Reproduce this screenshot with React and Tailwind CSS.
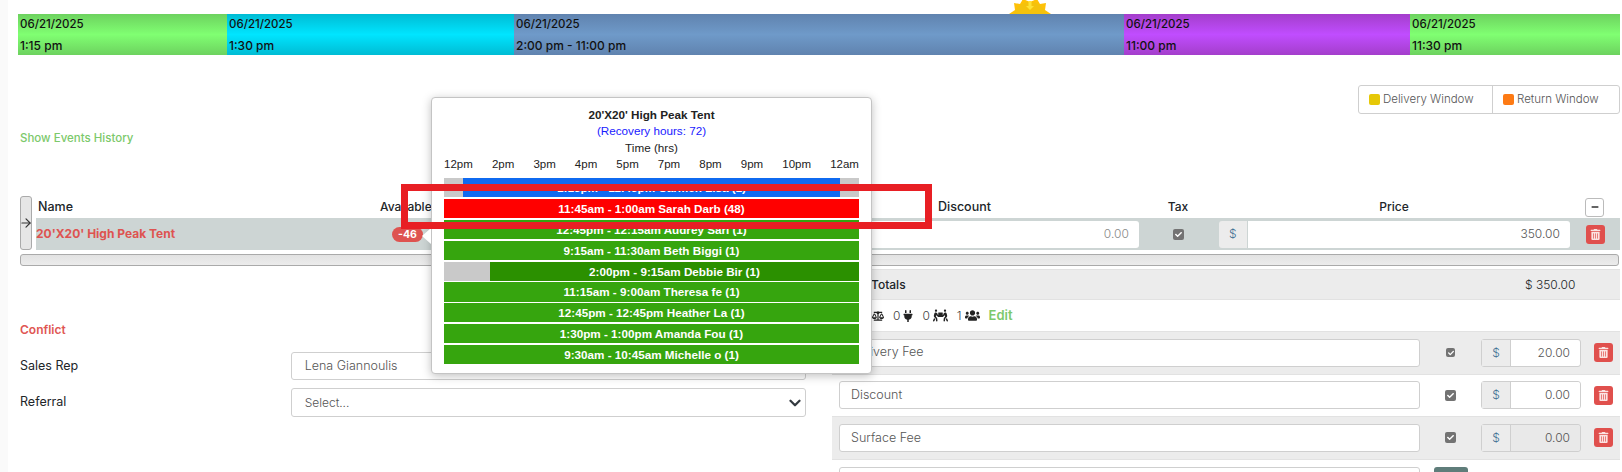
import React from 'react';
import { ArrowRight } from 'lucide-react';
import { FaBalanceScale, FaCheck, FaMinus, FaPeopleCarry, FaPlug, FaTrashAlt, FaUsers } from 'react-icons/fa';

const segments = [
  { time: '1:15 pm', width: 'w-[209px]', color: 'from-[#6dd25f] via-[#80ff72] to-[#6dd25f]' },
  { time: '1:30 pm', width: 'w-[287px]', color: 'from-[#00bcd4] via-[#00e5ff] to-[#00bcd4]' },
  { time: '2:00 pm - 11:00 pm', width: 'w-[610px]', color: 'from-[#6083af] via-[#6f9ac9] to-[#6083af]' },
  { time: '11:00 pm', width: 'w-[286px]', color: 'from-[#a43ecb] via-[#c04dff] to-[#a43ecb]' },
  { time: '11:30 pm', width: 'flex-1', color: 'from-[#6dd25f] via-[#80ff72] to-[#6dd25f]' },
];

const hours = ['12pm', '2pm', '3pm', '4pm', '5pm', '7pm', '8pm', '9pm', '10pm', '12am'];

const bookings = [
  { label: '1:15pm - 11:45pm Carmen Lisa (1)', color: 'bg-[#0f6af0]', before: 'w-[19px]', after: 'w-[19px]', height: 'h-[19px]' },
  { label: '11:45am - 1:00am Sarah Darb (48)', color: 'bg-[#ff0000]', height: 'h-[19px]' },
  { label: '12:45pm - 12:15am Audrey Sari (1)', color: 'bg-[#36a50e]', height: 'h-[19px]' },
  { label: '9:15am - 11:30am Beth Biggi (1)', color: 'bg-[#36a50e]', height: 'h-[19px]' },
  { label: '2:00pm - 9:15am Debbie Bir (1)', color: 'bg-[#2b9000]', before: 'w-[46px]', height: 'h-[19px]' },
  { label: '11:15am - 9:00am Theresa fe (1)', color: 'bg-[#36a50e]', height: 'h-[20px] -mt-px' },
  { label: '12:45pm - 12:45pm Heather La (1)', color: 'bg-[#36a50e]', height: 'h-[19px] -mt-px' },
  { label: '1:30pm - 1:00pm Amanda Fou (1)', color: 'bg-[#36a50e]', height: 'h-[19px]' },
  { label: '9:30am - 10:45am Michelle o (1)', color: 'bg-[#36a50e]', height: 'h-[19px]' },
];

const fees = [
  { name: 'Delivery Fee', value: '20.00', shade: 'bg-[#ececec]', small: true },
  { name: 'Discount', value: '0.00', shade: 'bg-white' },
  { name: 'Surface Fee', value: '0.00', shade: 'bg-[#ececec]', locked: true },
];

const Check = ({ small }) => (
  <span className={`flex items-center justify-center rounded-[2px] bg-[#737373] text-white ${small ? 'h-[9px] w-[9px]' : 'h-[11px] w-[11px]'}`}>
    <FaCheck className={small ? 'text-[6px]' : 'text-[7px]'} />
  </span>
);

const TrashButton = () => (
  <span className="flex h-[19px] w-[19px] items-center justify-center rounded-[3px] bg-[#e0504d] text-[#fbe3e2]">
    <FaTrashAlt className="text-[11px]" />
  </span>
);

const Sun = () => (
  <svg viewBox="0 0 44 14" className="absolute left-[1008px] top-0 h-[14px] w-[44px]">
    <path d="M1 14 L7 10 L6 3 L12 4 L15 -1 L22 2 L29 -1 L32 4 L38 3 L37 10 L43 14 Z" fill="#ffc107" />
    <circle cx="22" cy="19" r="17" fill="#f4c20d" />
    <path d="M20.5 1 H23.5 V6 H26 L22 10 L18 6 H20.5 Z" fill="#ffe234" />
  </svg>
);

const App = () => {
  return (
    <div className="relative flex h-[472px] w-[1622px] overflow-hidden bg-white font-['Inter',sans-serif] text-[#212529]">
      <div className="w-2 bg-[#fafafa]"></div>

      <div className="flex-1 pl-[10px] pr-[2px]">
        <div className="mt-[14px] flex h-[41px]">
          {segments.map((segment, index) => (
            <div key={index} className={`${segment.width} bg-gradient-to-b ${segment.color} pl-[2px] font-medium leading-[21px] text-[#111]`}>
              <div className="text-[11.5px]">06/21/2025</div>
              <div className="text-[12px]">{segment.time}</div>
            </div>
          ))}
        </div>

        <div className="mt-[30px] flex justify-end">
          <div className="flex h-[29px] items-center rounded-[3px] border border-[#cfcfcf] text-[11.5px] font-light text-[#555]">
            <div className="flex h-full w-[134px] items-center gap-[3px] border-r border-[#cfcfcf] pl-[10px]">
              <span className="h-[11px] w-[11px] rounded-[2px] bg-[#e6c807]"></span>
              Delivery Window
            </div>
            <div className="flex h-full w-[126px] items-center gap-[3px] pl-[10px]">
              <span className="h-[11px] w-[11px] rounded-[2px] bg-[#fd7a14]"></span>
              Return Window
            </div>
          </div>
        </div>

        <div className="mt-[15px] pl-[2px] text-[11.5px] font-medium leading-[18px] text-[#7cc96b]">Show Events History</div>

        <div className="mt-[49px] flex pl-[2px]">
          <div className="flex h-[54px] w-[12px] items-center justify-center rounded-[3px] border border-[#aaa] bg-[#e6e6e6]">
            <ArrowRight className="h-[14px] w-[14px] shrink-0 text-[#333]" strokeWidth={2} />
          </div>
          <div className="ml-[4px] flex-1">
            <div className="flex h-[22px] items-center text-[12px] font-medium">
              <div className="ml-[2px] w-[342px] text-[12.5px]">Name</div>
              <div className="w-[558px]">Available</div>
              <div className="w-[210px] text-[12.5px]">Discount</div>
              <div className="w-[60px] text-center">Tax</div>
              <div className="ml-[106px] w-[160px] text-center">Price</div>
              <div className="ml-[111px] flex h-[19px] w-[19px] items-center justify-center rounded-[3px] border border-[#bbb]">
                <FaMinus className="text-[8px] text-[#333]" />
              </div>
            </div>
            <div className="flex h-[32px] items-center bg-[#cdd5d4]">
              <div className="w-[356px] text-[12px] font-bold text-[#de5350]">20'X20' High Peak Tent</div>
              <span className="rounded-full bg-[#de5350] px-[6px] text-[10.5px] font-bold leading-[15px] text-white">-46</span>
              <div className="ml-[429px] flex h-[27px] w-[287px] items-center justify-end rounded-[3px] bg-white pr-[10px] text-[12px] font-light text-[#8a8a8a]">0.00</div>
              <div className="flex w-[80px] justify-center"><Check /></div>
              <div className="flex h-[27px] w-[28px] items-center justify-center rounded-l-[3px] bg-[#ececec] text-[12px] font-light text-[#3f6f93]">$</div>
              <div className="ml-[1px] flex h-[27px] w-[322px] items-center justify-end rounded-r-[3px] bg-white pr-[10px] text-[12px] font-light text-[#555]">350.00</div>
              <div className="ml-[16px]"><TrashButton /></div>
            </div>
          </div>
        </div>

        <div className="ml-[2px] mr-px mt-[4px] h-[12px] rounded-[3px] border border-[#aaa] bg-gradient-to-b from-[#e2e2e2] to-[#ececec]"></div>

        <div className="flex">
          <div className="w-[788px] pl-[2px]">
            <div className="mt-[54px] text-[12px] font-semibold leading-[20px] text-[#e05653]">Conflict</div>
            <div className="mt-[12px] flex h-[28px] items-center text-[12.5px]">
              <div className="w-[271px]">Sales Rep</div>
              <div className="flex h-full w-[516px] items-center rounded-[3px] border border-[#cfcfcf] pl-[13px] font-light text-[#555]">Lena Giannoulis</div>
            </div>
            <div className="mt-[8px] flex h-[29px] items-center text-[12.5px]">
              <div className="w-[271px]">Referral</div>
              <div className="flex h-full w-[516px] items-center justify-between rounded-[3px] border border-[#cfcfcf] pl-[13px] pr-[4px] text-[12px] font-light text-[#555]">
                Select...
                <svg viewBox="0 0 16 16" className="h-[12px] w-[12px]">
                  <path d="M2 5l6 6 6-6" fill="none" stroke="#343a40" strokeWidth="3" strokeLinecap="round" strokeLinejoin="round" />
                </svg>
              </div>
            </div>
          </div>

          <div className="ml-[26px] mt-[3px] flex-1">
            <div className="flex h-[31px] items-center border-y border-[#e2e2e2] bg-[#ececec] pl-[39px] text-[12px] font-medium">
              <div className="w-[654px]">Totals</div>
              <div className="font-light">$ 350.00</div>
            </div>
            <div className="flex h-[31px] items-center pl-[40px] text-[12px] font-light text-[#444]">
              <FaBalanceScale className="text-[12px] text-[#222]" />
              <span className="ml-[9px]">0</span>
              <FaPlug className="ml-[2px] text-[12px] text-[#222]" />
              <span className="ml-[8px]">0</span>
              <FaPeopleCarry className="ml-[3px] text-[15px] text-[#222]" />
              <span className="ml-[9px]">1</span>
              <FaUsers className="ml-[3px] text-[15px] text-[#222]" />
              <span className="ml-[9px] text-[13px] font-semibold text-[#7cc96b]">Edit</span>
            </div>
            {fees.map((fee) => (
              <div key={fee.name} className={`flex h-[42.6px] items-center border-t border-[#e2e2e2] pl-[7px] ${fee.shade}`}>
                <div className="flex h-[28px] w-[581px] items-center rounded-[3px] border border-[#cfcfcf] bg-white pl-[11px] text-[12.5px] font-light text-[#555]">{fee.name}</div>
                <div className="flex w-[61px] justify-center"><Check small={fee.small} /></div>
                <div className="flex h-[28px] w-[100px] rounded-[3px] border border-[#cfcfcf]">
                  <div className="flex w-[29px] items-center justify-center border-r border-[#cfcfcf] bg-[#ececec] text-[12px] font-light text-[#3f6f93]">$</div>
                  <div className={`flex flex-1 items-center justify-end rounded-r-[3px] pr-[10px] text-[12px] font-light text-[#555] ${fee.locked ? 'bg-[#e9e9e9]' : 'bg-white'}`}>{fee.value}</div>
                </div>
                <div className="ml-[13px]"><TrashButton /></div>
              </div>
            ))}
            <div className="flex items-start border-t border-[#e2e2e2] pl-[7px] pt-[7px]">
              <div className="h-[28px] w-[581px] rounded-[3px] border border-[#cfcfcf]"></div>
              <div className="ml-[14px] h-[28px] w-[34px] rounded-[3px] bg-[#5f7d7a]"></div>
            </div>
          </div>
        </div>
      </div>

      <Sun />

      {/* popup over the table */}
      <div className="absolute left-[431px] top-[97px] h-[277px] w-[441px] rounded-[4px] border border-[#c4c4c4] bg-white px-[12px] pt-[8px] font-['Liberation_Sans',sans-serif] text-[11.7px] shadow-[0_2px_10px_rgba(0,0,0,0.25)]">
        <div className="text-center font-bold leading-[17px] text-[#222]">20'X20' High Peak Tent</div>
        <div className="text-center leading-[16px] text-[#1a1aff]">(Recovery hours: 72)</div>
        <div className="text-center leading-[17px] text-[#222]">Time (hrs)</div>
        <div className="flex h-[18px] items-center justify-between text-[11.5px] text-[#222]">
          {hours.map((hour) => (
            <span key={hour}>{hour}</span>
          ))}
        </div>
        <div className="mt-[4px] flex flex-col gap-[2px]">
          {bookings.map((booking) => (
            <div key={booking.label} className={`flex bg-[#c9c9c9] ${booking.height}`}>
              {booking.before && <div className={booking.before}></div>}
              <div className={`flex flex-1 items-center justify-center font-bold text-white ${booking.color}`}>{booking.label}</div>
              {booking.after && <div className={booking.after}></div>}
            </div>
          ))}
        </div>
      </div>

      <div className="absolute left-[422px] top-[228px] h-0 w-0 border-y-[8px] border-r-[9px] border-y-transparent border-r-white"></div>

      {/* red annotation box */}
      <div className="absolute left-[401px] top-[184px] h-[45px] w-[531px] border-[7px] border-[#e81f24]"></div>
    </div>
  );
};

export default App;
